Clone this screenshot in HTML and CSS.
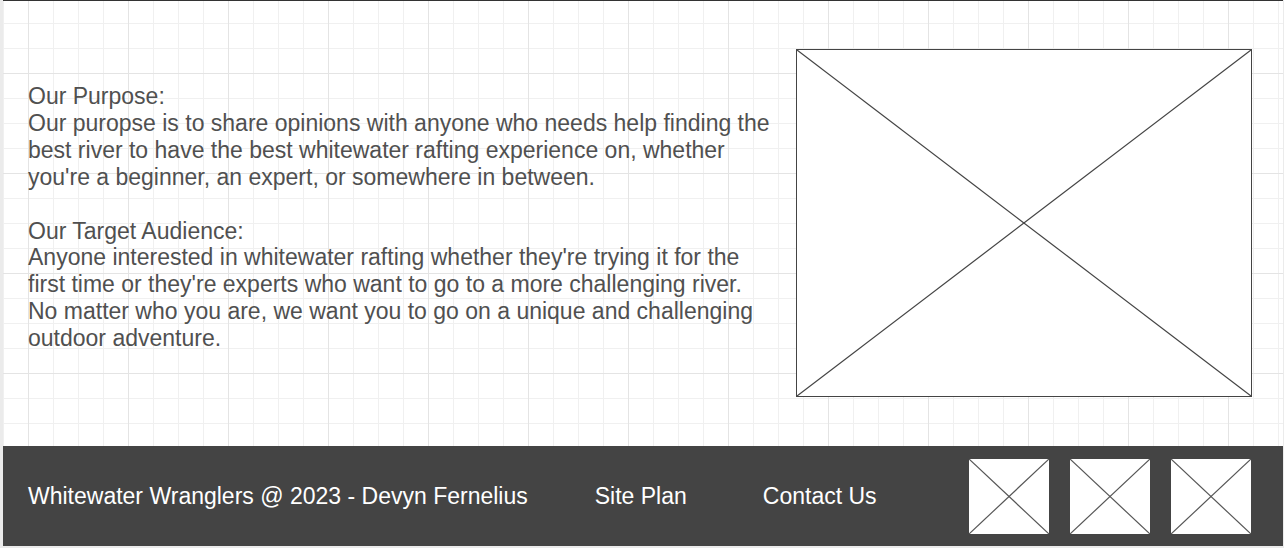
FILE: index.html
```html
<!DOCTYPE html>
<html lang="en">
<head>
<meta charset="utf-8">
<title>Whitewater Wranglers - About</title>
<link rel="stylesheet" href="styles.css">
</head>
<body>
<div class="frame">
  <main class="main">
    <div class="intro">
      <p class="copy">Our Purpose:<br>Our puropse is to share opinions with anyone who needs help finding the<br>best river to have the best whitewater rafting experience on, whether<br>you're a beginner, an expert, or somewhere in between.<br><br>Our Target Audience:<br>Anyone interested in whitewater rafting whether they're trying it for the<br>first time or they're experts who want to go to a more challenging river.<br>No matter who you are, we want you to go on a unique and challenging<br>outdoor adventure.</p>
    </div>
    <div class="placeholder hero">
      <svg viewBox="0 0 100 100" preserveAspectRatio="none"><line x1="0" y1="0" x2="100" y2="100"/><line x1="100" y1="0" x2="0" y2="100"/></svg>
    </div>
  </main>
  <footer class="footer">
    <span class="credit">Whitewater Wranglers @ 2023 - Devyn Fernelius</span>
    <a class="flink flink-plan" href="#">Site Plan</a>
    <a class="flink flink-contact" href="#">Contact Us</a>
    <div class="socials">
      <div class="placeholder social"><svg viewBox="0 0 100 100" preserveAspectRatio="none"><line x1="0" y1="0" x2="100" y2="100"/><line x1="100" y1="0" x2="0" y2="100"/></svg></div>
      <div class="placeholder social"><svg viewBox="0 0 100 100" preserveAspectRatio="none"><line x1="0" y1="0" x2="100" y2="100"/><line x1="100" y1="0" x2="0" y2="100"/></svg></div>
      <div class="placeholder social"><svg viewBox="0 0 100 100" preserveAspectRatio="none"><line x1="0" y1="0" x2="100" y2="100"/><line x1="100" y1="0" x2="0" y2="100"/></svg></div>
    </div>
  </footer>
</div>
</body>
</html>
```

FILE: styles.css
```css
html, body {
  margin: 0;
  padding: 0;
  height: 548px;
  overflow: hidden;
}
body {
  background: #ebebeb;
  font-family: "Liberation Sans", Arial, sans-serif;
}
.frame {
  margin: 0 1px 0 3px;
  border-top: 1px solid #333;
  height: 545px;
  display: flex;
  flex-direction: column;
  background-color: #ffffff;
  background-image:
    linear-gradient(to right, #e4e4e4 1px, transparent 1px),
    linear-gradient(to bottom, #e4e4e4 1px, transparent 1px),
    linear-gradient(to right, #f0f0f0 1px, transparent 1px),
    linear-gradient(to bottom, #f0f0f0 1px, transparent 1px);
  background-size: 100px 100px, 100px 100px, 25px 25px, 25px 25px;
  background-position: 25px 0, 0 72px, 0 0, 0 22px;
}
.main {
  flex: 1;
  display: flex;
  align-items: center;
  padding: 0 31px 0 25px;
}
.intro {
  flex: 1;
  padding-bottom: 12px;
}
.copy {
  margin: 0;
  color: #505050;
  font-size: 23px;
  line-height: 26.9px;
}
.placeholder {
  background: #fff;
  border: 1px solid #444;
  box-sizing: border-box;
  display: flex;
}
.placeholder svg {
  width: 100%;
  height: 100%;
  display: block;
}
.placeholder line {
  stroke: #444;
  stroke-width: 1.2;
  vector-effect: non-scaling-stroke;
}
.hero {
  width: 456px;
  height: 348px;
  margin-bottom: 2px;
}
.footer {
  height: 100px;
  flex: none;
  background: #444444;
  display: flex;
  align-items: center;
  padding: 0 32px 0 25px;
  box-sizing: border-box;
  color: #fff;
  font-size: 23px;
}
.flink {
  color: #fff;
  text-decoration: none;
}
.flink-plan {
  margin-left: 67px;
}
.flink-contact {
  margin-left: 76px;
}
.socials {
  margin-left: auto;
  display: flex;
  gap: 21px;
}
.social {
  width: 80px;
  height: 75px;
  border: none;
}
.social line {
  stroke: #555;
}
```
